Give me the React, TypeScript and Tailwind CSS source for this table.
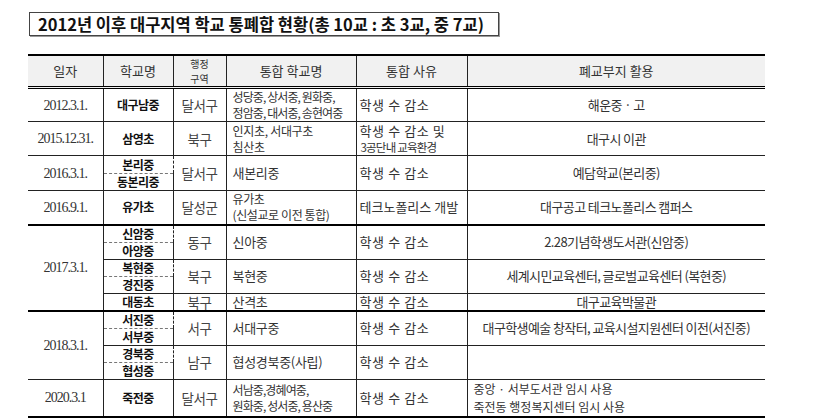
import React from "react";

const KR = { fontFamily: '"Noto Sans CJK KR", "Noto Sans", sans-serif' };
const DATE = { fontFamily: '"Liberation Serif", "DejaVu Serif", serif' };

// cell base: bottom + right rule
const cell = "border-b border-r border-[#222] align-middle p-0";
const last = "border-b border-[#222] align-middle p-0";
const thick = "border-b-2 border-b-black";
const dash = "border-b border-dashed border-b-[#777]";
const head = "border-t-2 border-t-black border-b-[3px] border-b-black border-double font-normal";

function Date({ children, rows, className = "" }: { children: React.ReactNode; rows?: number; className?: string }) {
  return (
    <td rowSpan={rows} className={`${cell} ${className} text-center text-[14px] tracking-[-1px] text-[#333]`} style={DATE}>
      {children}
    </td>
  );
}

function School({ name, className = "" }: { name: string; className?: string }) {
  return (
    <td className={`${cell} ${className} text-center text-[12px] leading-[16px] font-bold tracking-[-0.6px] text-[#111]`}>
      {name}
    </td>
  );
}

function Area({ children, rows, className = "" }: { children: React.ReactNode; rows?: number; className?: string }) {
  return (
    <td rowSpan={rows} className={`${cell} ${className} text-center text-[13.5px] leading-[16px] tracking-[-0.5px] text-[#444]`}>
      {children}
    </td>
  );
}

function Merged({ lines, rows, className = "" }: { lines: string[]; rows?: number; className?: string }) {
  return (
    <td rowSpan={rows} className={`${cell} ${className} pl-[6px] text-[12px] leading-[16px] tracking-[-0.9px] text-[#333] whitespace-nowrap`}>
      {lines.map((l, i) => (
        <div key={i}>{l}</div>
      ))}
    </td>
  );
}

function Reason({ lines, rows, className = "" }: { lines: string[]; rows?: number; className?: string }) {
  return (
    <td rowSpan={rows} className={`${cell} ${className} pl-[3px] text-[13px] leading-[16px] tracking-[0.6px] text-[#333] whitespace-nowrap`}>
      {lines.map((l, i) => (
        <div key={i} className={i > 0 ? "text-[11.5px] tracking-[-0.8px] pl-[1px]" : ""}>
          {l}
        </div>
      ))}
    </td>
  );
}

function Use({ children, rows, className = "" }: { children?: React.ReactNode; rows?: number; className?: string }) {
  return (
    <td rowSpan={rows} className={`${last} ${className} text-center text-[13px] leading-[16px] tracking-[-0.6px] text-[#333] whitespace-nowrap`}>
      {children}
    </td>
  );
}

export default function App() {
  return (
    <div className="w-[830px] h-[419px] bg-white overflow-hidden" style={KR}>
      <div className="pt-[12px] pl-[29px]">
        <div className="w-[470px] h-[24px] border border-[#444] shadow-[1px_1px_0_#999] flex items-center pl-[8px]">
          <span className="text-[16.5px] font-bold tracking-[0px] text-[#111] leading-none whitespace-nowrap">
            2012년 이후 대구지역 학교 통폐합 현황(총 10교 : 초 3교, 중 7교)
          </span>
        </div>
      </div>

      <table className="mt-[18px] ml-[28px] w-[737px] table-fixed border-collapse">
        <colgroup>
          <col className="w-[75px]" />
          <col className="w-[70px]" />
          <col className="w-[53px]" />
          <col className="w-[130px]" />
          <col className="w-[111px]" />
          <col className="w-[298px]" />
        </colgroup>
        <thead>
          <tr className="h-[31px] bg-[#f1f1f1] text-[#333] text-[13px] font-normal">
            <th className={`${cell} ${head}`}>일자</th>
            <th className={`${cell} ${head}`}>학교명</th>
            <th className={`${cell} ${head} text-[10px] leading-[15px]`}>
              <div>행정</div>
              <div>구역</div>
            </th>
            <th className={`${cell} ${head}`}>통합 학교명</th>
            <th className={`${cell} ${head}`}>통합 사유</th>
            <th className={`${last} ${head}`}>폐교부지 활용</th>
          </tr>
        </thead>
        <tbody>
          <tr className="h-[33px]">
            <Date>2012.3.1.</Date>
            <School name="대구남중" />
            <Area>달서구</Area>
            <Merged lines={["성당중, 상서중, 원화중,", "정암중, 대서중, 송현여중"]} />
            <Reason lines={["학생 수 감소"]} />
            <Use>해운중 · 고</Use>
          </tr>
          <tr className="h-[34px]">
            <Date>2015.12.31.</Date>
            <School name="삼영초" />
            <Area>북구</Area>
            <Merged lines={["인지초, 서대구초", "침산초"]} className="!tracking-[-0.3px]" />
            <Reason lines={["학생 수 감소 및", "3공단내 교육환경"]} />
            <Use>대구시 이관</Use>
          </tr>

          <tr className="h-[18px]">
            <Date rows={2}>2016.3.1.</Date>
            <School name="본리중" className={dash} />
            <Area rows={2}>달서구</Area>
            <Merged rows={2} lines={["새본리중"]} className="!text-[13px] !tracking-[-0.3px]" />
            <Reason rows={2} lines={["학생 수 감소"]} />
            <Use rows={2}>예담학교(본리중)</Use>
          </tr>
          <tr className="h-[17px]">
            <School name="동본리중" />
          </tr>

          <tr className="h-[34px]">
            <Date className={thick}>2016.9.1.</Date>
            <School name="유가초" className={thick} />
            <Area className={thick}>달성군</Area>
            <Merged lines={["유가초", "(신설교로 이전 통합)"]} className={`${thick} !tracking-[-0.4px]`} />
            <Reason lines={["테크노폴리스 개발"]} className={`${thick} !tracking-[0px]`} />
            <Use className={thick}>대구공고 테크노폴리스 캠퍼스</Use>
          </tr>

          <tr className="h-[17px]">
            <Date rows={5} className={thick}>2017.3.1.</Date>
            <School name="신암중" className={dash} />
            <Area rows={2}>동구</Area>
            <Merged rows={2} lines={["신아중"]} className="!text-[13px] !tracking-[-0.3px]" />
            <Reason rows={2} lines={["학생 수 감소"]} />
            <Use rows={2}>2.28기념학생도서관(신암중)</Use>
          </tr>
          <tr className="h-[17px]">
            <School name="아양중" />
          </tr>
          <tr className="h-[17px]">
            <School name="복현중" className={dash} />
            <Area rows={2}>북구</Area>
            <Merged rows={2} lines={["복현중"]} className="!text-[13px] !tracking-[-0.3px]" />
            <Reason rows={2} lines={["학생 수 감소"]} />
            <Use rows={2}>세계시민교육센터, 글로벌교육센터 (복현중)</Use>
          </tr>
          <tr className="h-[17px]">
            <School name="경진중" />
          </tr>
          <tr className="h-[17px]">
            <School name="대동초" className={thick} />
            <Area className={thick}>북구</Area>
            <Merged lines={["산격초"]} className={`${thick} !text-[13px] !tracking-[-0.3px]`} />
            <Reason lines={["학생 수 감소"]} className={thick} />
            <Use className={thick}>대구교육박물관</Use>
          </tr>

          <tr className="h-[17px]">
            <Date rows={4}>2018.3.1.</Date>
            <School name="서진중" className={dash} />
            <Area rows={2}>서구</Area>
            <Merged rows={2} lines={["서대구중"]} className="!text-[13px] !tracking-[-0.3px]" />
            <Reason rows={2} lines={["학생 수 감소"]} />
            <Use rows={2}>대구학생예술 창작터, 교육시설지원센터 이전(서진중)</Use>
          </tr>
          <tr className="h-[17px]">
            <School name="서부중" />
          </tr>
          <tr className="h-[17px]">
            <School name="경북중" className={dash} />
            <Area rows={2}>남구</Area>
            <Merged rows={2} lines={["협성경북중(사립)"]} className="!text-[13px] !tracking-[-0.3px]" />
            <Reason rows={2} lines={["학생 수 감소"]} />
            <Use rows={2} />
          </tr>
          <tr className="h-[17px]">
            <School name="협성중" />
          </tr>

          <tr className="h-[37px]">
            <Date className={thick}>2020.3.1</Date>
            <School name="죽전중" className={thick} />
            <Area className={thick}>달서구</Area>
            <Merged lines={["서남중,경혜여중,", "원화중, 성서중, 용산중"]} className={thick} />
            <Reason lines={["학생 수 감소"]} className={thick} />
            <td className={`${last} ${thick} pl-[6px] text-[12px] leading-[18px] tracking-[0px] text-[#333] whitespace-nowrap`}>
              <div>중앙 · 서부도서관 임시 사용</div>
              <div>죽전동 행정복지센터 임시 사용</div>
            </td>
          </tr>
        </tbody>
      </table>
    </div>
  );
}
